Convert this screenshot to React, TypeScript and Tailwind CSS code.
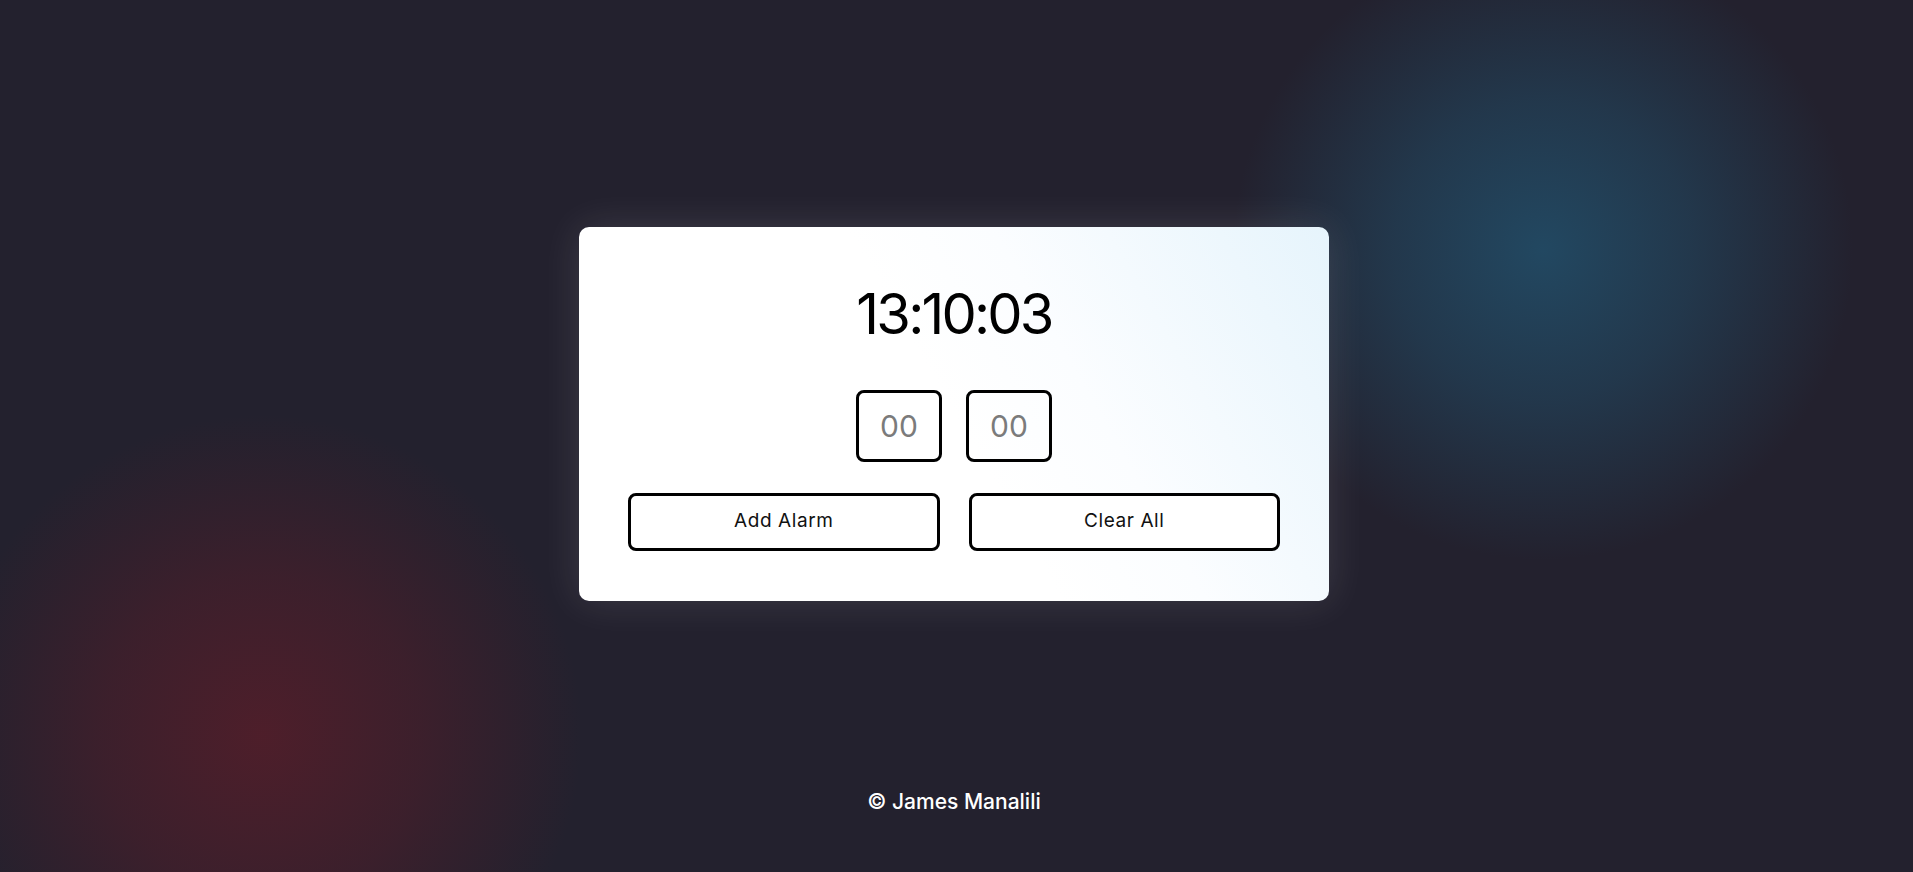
import { useState } from 'react';

// Reloj con alarmas
export default function App() {
  const [now] = useState('13:10:03');
  const [hour, setHour] = useState('');
  const [minute, setMinute] = useState('');

  return (
    <div
      className="h-screen w-full flex flex-col items-center bg-[#23212e] bg-[radial-gradient(circle_at_1543px_250px,rgba(34,74,100,0.95)_0px,rgba(34,74,100,0.55)_150px,transparent_310px),radial-gradient(circle_at_262px_735px,rgba(80,30,42,0.95)_0px,rgba(80,30,42,0.55)_160px,transparent_320px)]"
      style={{ fontFamily: 'Inter, "Open Sans", sans-serif' }}
    >
      <main className="flex-1 w-full flex items-center justify-center pt-[40px] pr-[5px]">
        <div className="w-[750px] h-[374px] rounded-[10px] bg-[linear-gradient(240deg,#e6f4fc_0%,#fbfdff_35%,#ffffff_50%)] shadow-[0_0_40px_rgba(255,255,255,0.12)] px-[49px] pt-[59px] flex flex-col items-center">
          <div className="text-[56px] leading-none text-black tracking-[-0.05em]">{now}</div>
          <div className="flex gap-6 mt-12">
            <input
              value={hour}
              onChange={(e) => setHour(e.target.value)}
              placeholder="00"
              className="w-[86px] h-[72px] border-[3px] border-black rounded-lg text-center text-[30px] text-black placeholder:text-[#7b7b7b] outline-none bg-transparent"
            />
            <input
              value={minute}
              onChange={(e) => setMinute(e.target.value)}
              placeholder="00"
              className="w-[86px] h-[72px] border-[3px] border-black rounded-lg text-center text-[30px] text-black placeholder:text-[#7b7b7b] outline-none bg-transparent"
            />
          </div>
          <div className="grid grid-cols-2 gap-[29px] w-full mt-[31px]">
            <button className="h-[58px] border-[3px] border-black rounded-lg bg-white text-[19px] tracking-[0.03em] text-[#111]">
              Add Alarm
            </button>
            <button className="h-[58px] border-[3px] border-black rounded-lg bg-white text-[19px] tracking-[0.03em] text-[#111]">
              Clear All
            </button>
          </div>
        </div>
      </main>
      <footer className="pb-[55px] pr-[5px] text-white text-[21px] font-medium leading-[30px]">© James Manalili</footer>
    </div>
  );
}
